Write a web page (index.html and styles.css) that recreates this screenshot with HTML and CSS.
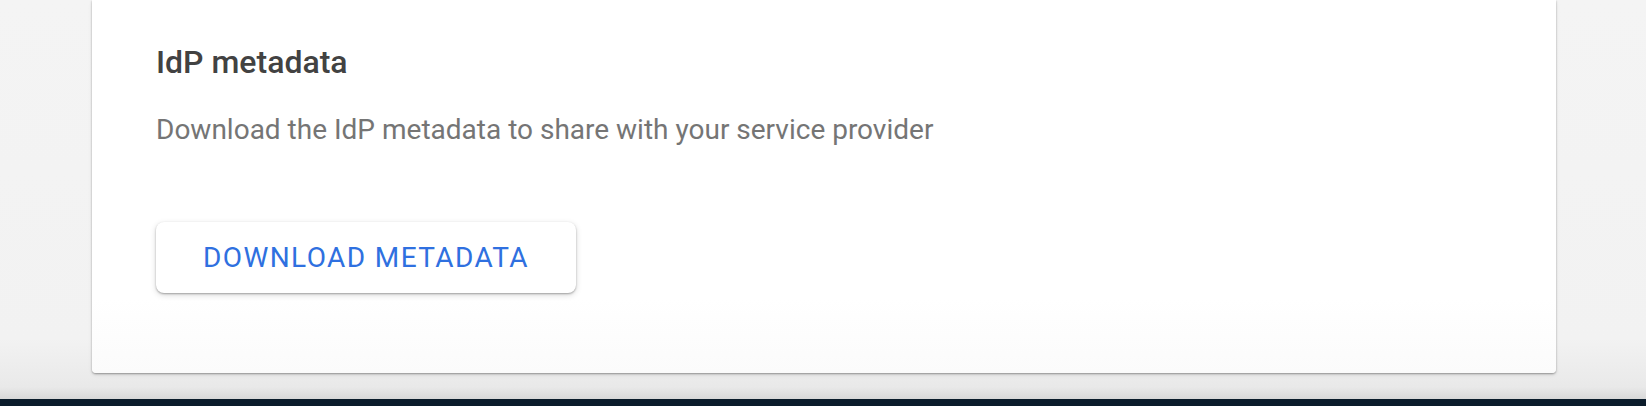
FILE: index.html
```html
<!DOCTYPE html>
<html lang="en">
<head>
  <meta charset="UTF-8" />
  <title>IdP metadata</title>
  <link rel="stylesheet" href="styles.css">
</head>
<body>

  <main class="page">
    <section class="card">
      <h2>IdP metadata</h2>
      <p class="desc">Download the IdP metadata to share with your service provider</p>
      <button class="btn" type="button">Download metadata</button>
    </section>
  </main>

  <div class="bottom-bar"></div>

</body>
</html>
```

FILE: styles.css
```css
* {
  box-sizing: border-box;
  margin: 0;
  padding: 0;
}

html, body {
  height: 100%;
}

body {
  font-family: Roboto, 'Liberation Sans', sans-serif;
  background: #f3f3f3;
  display: flex;
  flex-direction: column;
  overflow: hidden;
}

.page {
  flex: 1;
  padding: 0 90px 0 92px;
  background: linear-gradient(180deg, #f4f4f4 0%, #f2f2f2 85%, #e9e9e9 97%, #d8d8d8 100%);
}

.card {
  background: linear-gradient(180deg, #ffffff 80%, #fbfbfb 100%);
  height: 373px;
  border-radius: 0 0 4px 4px;
  padding: 42px 64px 0;
  box-shadow: 0 1px 2px rgba(0,0,0,0.35), 0 2px 4px rgba(0,0,0,0.08);
}

.card h2 {
  font-size: 32px;
  line-height: 40px;
  font-weight: 500;
  color: #424242;
}

.desc {
  margin-top: 30px;
  font-size: 28px;
  line-height: 36px;
  color: #757575;
}

.btn {
  margin-top: 74px;
  width: 420px;
  height: 71px;
  background: #fff;
  border: none;
  border-radius: 8px;
  font-family: Roboto, 'Liberation Sans', sans-serif;
  font-size: 28px;
  font-weight: 400;
  letter-spacing: 1.4px;
  text-transform: uppercase;
  color: #2f70e0;
  box-shadow: 0 1px 2px rgba(0,0,0,0.3), 0 2px 6px rgba(0,0,0,0.15);
  cursor: pointer;
}

.bottom-bar {
  height: 7px;
  background: #0b1c2b;
}
```
